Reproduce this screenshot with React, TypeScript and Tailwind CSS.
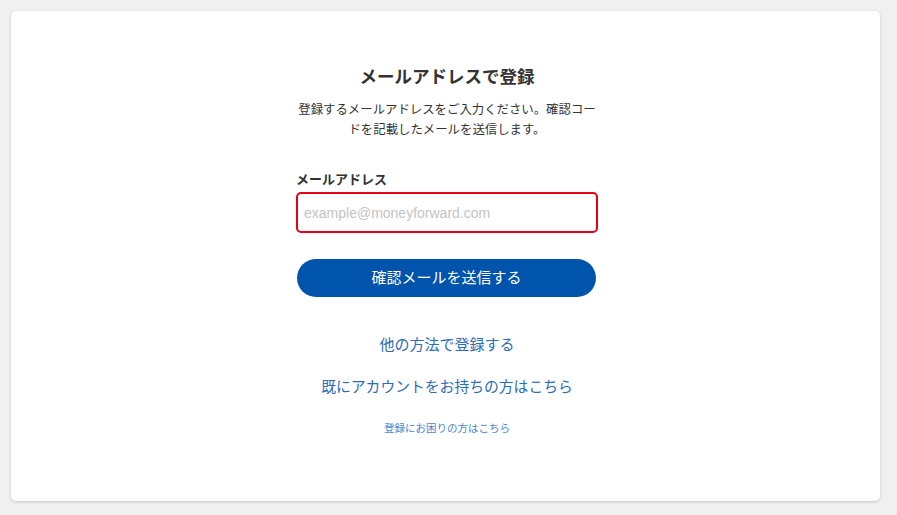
export default function App() {
  const jp = { fontFamily: '"Liberation Sans", "Noto Sans CJK JP", sans-serif' }

  return (
    <div className="min-h-screen bg-[#f0f0f0] p-[11px] pr-[17px]" style={jp}>
      {/* card */}
      <div className="h-[490px] rounded-[5px] bg-white shadow-[0_1px_3px_rgba(0,0,0,0.18)] flex justify-center">
        <div className="ml-[3px] w-[302px] pt-[54px] flex flex-col">
          <h1 className="text-center text-[17.5px] font-bold leading-[24px] text-[#333]">メールアドレスで登録</h1>
          <p className="mt-[11px] px-[2px] text-center text-[12.4px] leading-[20px] text-[#333]">
            登録するメールアドレスをご入力ください。確認コードを記載したメールを送信します。
          </p>

          <label className="mt-[31px] text-[13px] font-bold leading-[18px] text-[#333]">メールアドレス</label>
          <input
            type="text"
            placeholder="example@moneyforward.com"
            className="mt-[3px] h-[41px] w-full rounded-[5px] border-2 border-[#e60012] px-[6px] text-[14px] text-[#333] placeholder:text-[#c4c4c4] outline-none"
          />

          <button className="mt-[26px] ml-[1px] h-[38px] w-[299px] rounded-full bg-[#0054ac] text-[15px] text-white">
            確認メールを送信する
          </button>

          <div className="mt-[37px] flex flex-col items-center">
            <a className="text-[15px] leading-[22px] text-[#2c6db5]">他の方法で登録する</a>
            <a className="mt-[20px] text-[14.8px] leading-[22px] text-[#2c6db5] whitespace-nowrap">既にアカウントをお持ちの方はこちら</a>
            <a className="mt-[22px] text-[10.5px] leading-[16px] text-[#4a86cf]">登録にお困りの方はこちら</a>
          </div>
        </div>
      </div>
    </div>
  )
}
